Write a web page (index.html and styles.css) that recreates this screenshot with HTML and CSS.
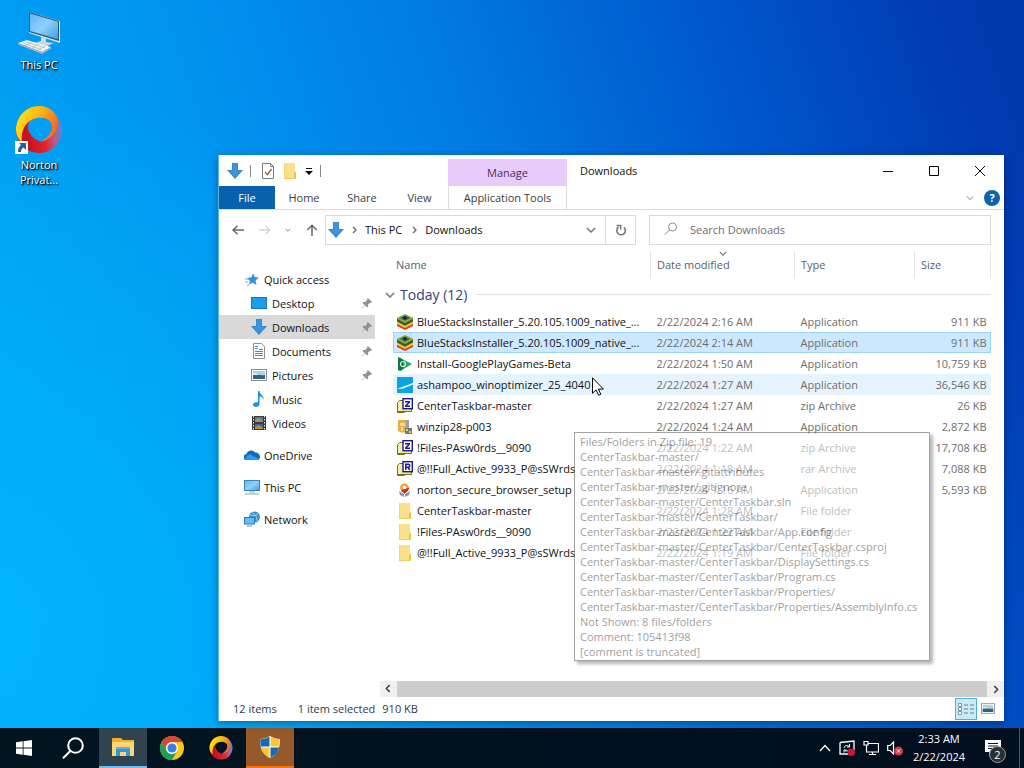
FILE: index.html
```
<!DOCTYPE html>
<html lang="en">
<head>
    <meta charset="UTF-8" />
    <meta name="viewport" content="width=device-width, initial-scale=1.0" />
    <title>Downloads</title>
    <link rel="stylesheet" href="styles.css">
</head>
<body>

<!-- shared icons -->
<svg class="defs" aria-hidden="true">
    <defs>
        <linearGradient id="screen" x1="0" y1="0" x2="1" y2="1">
            <stop offset="0" stop-color="#5fb8f5"/>
            <stop offset="0.5" stop-color="#8ed0fa"/>
            <stop offset="1" stop-color="#3f9de8"/>
        </linearGradient>
        <linearGradient id="ring" x1="0" y1="0.3" x2="1" y2="0.6">
            <stop offset="0" stop-color="#ffe21a"/>
            <stop offset="0.5" stop-color="#fbb515"/>
            <stop offset="1" stop-color="#f0642c"/>
        </linearGradient>
        <linearGradient id="ringLow" x1="0" y1="0.6" x2="1" y2="0.4">
            <stop offset="0.2" stop-color="#c4141f"/>
            <stop offset="0.55" stop-color="#e3202c"/>
            <stop offset="0.8" stop-color="#b0608e"/>
            <stop offset="1" stop-color="#4a8ce0"/>
        </linearGradient>
    </defs>
    <symbol id="i-down" viewBox="0 0 16 16">
        <path d="M5 0h6v7h5l-8 9-8-9h5z" fill="#3d93dc"/>
        <path d="M5.500 .5h5v7h4.300L8 15.200 1.200 7.500h4.300z" fill="none" stroke="#2b7cc4" stroke-opacity=".5"/>
    </symbol>
    <symbol id="i-folder" viewBox="0 0 16 16">
        <path d="M2 0h11v8l1 1v7H2z" fill="#fbe08a"/>
        <path d="M2 0h1v16H2z" fill="#f6d470"/>
        <path d="M12 10l2-1v7h-2z" fill="#efc04d"/>
        <path d="M2 15h12v1H2z" fill="#f2cd62"/>
    </symbol>
    <symbol id="i-pin" viewBox="0 0 12 12">
        <path d="M7 1l4 4-1 1-1-.2-2 2 .2 1.700-1 1L4 8.300 1 11.300.700 11 3.700 8 1.500 5.800l1-1 1.700.2 2-2L6 2z" fill="#8d9298"/>
    </symbol>
    <symbol id="i-stack" viewBox="0 0 16 16">
        <path d="M0 9l8 4 8-4v3l-8 4-8-4z" fill="#dc3b2a"/>
        <path d="M0 7l8 4 8-4v3l-8 4-8-4z" fill="#f5c231"/>
        <path d="M0 4l8 4.500L16 4v3.500l-8 4.200-8-4.200z" fill="#3f5a2c"/>
        <path d="M0 3.800L8 0l8 3.800v1L8 9 0 4.800z" fill="#7fae45"/>
        <path d="M3 4l5-2.500L13 4 8 6.800z" fill="#3c5a55"/>
        <circle cx="8" cy="3.800" r="1.600" fill="#16232b"/>
    </symbol>
    <symbol id="i-zip" viewBox="0 0 16 16">
        <path d="M.5 4.500l2-2h4l1 2v10H.5z" fill="#f7efa8" stroke="#77701a"/>
        <path d="M.5 13.500h14v-3h-8" fill="#f4e98c" stroke="#77701a"/>
        <rect x="6" y=".7" width="9.300" height="10" fill="#fff" stroke="#1a1a8c" stroke-width="1.400"/>
        <path d="M8 3h5v1.500L10 7.500h3V9H8V7.500l3-3H8z" fill="#1a1a8c"/>
    </symbol>
    <symbol id="i-rar" viewBox="0 0 16 16">
        <path d="M.5 4.500l2-2h4l1 2v10H.5z" fill="#f7efa8" stroke="#77701a"/>
        <path d="M.5 13.500h14v-3h-8" fill="#f4e98c" stroke="#77701a"/>
        <rect x="6" y=".7" width="9.300" height="10" fill="#fff" stroke="#1a1a8c" stroke-width="1.400"/>
        <path d="M8.800 9V3.300h2.500a1.400 1.400 0 0 1 0 3H9M11 6.300L12.800 9" fill="none" stroke="#1a1a8c" stroke-width="1.500"/>
    </symbol>
    <symbol id="i-monitor" viewBox="0 0 16 16">
        <rect x=".5" y="1.500" width="15" height="10" fill="url(#screen)" stroke="#3a86bb"/>
        <path d="M5 13h6M1 15h14" stroke="#8aa0b0"/>
    </symbol>
    <symbol id="i-picture" viewBox="0 0 16 12">
        <rect x=".5" y=".5" width="15" height="11" fill="#fff" stroke="#8a8f94"/>
        <rect x="2" y="2" width="12" height="8" fill="#a9d3f0"/>
        <path d="M2 6c4-2 6 1 12 0v4H2z" fill="#36607f"/>
        <path d="M2 5c2-2 4-1 6 1H2z" fill="#dfeffa"/>
    </symbol>
    <symbol id="i-norton" viewBox="0 0 48 48">
        <path fill-rule="evenodd" d="M24 1a23 23 0 1 1 0 46 23 23 0 0 1 0-46zM12.700 20C14 13 20 11.700 25 11.700c7 0 12 3 12 9 0 6-5 12-11 15-7-2-13-8-13.300-15.700z" fill="url(#ringLow)"/>
        <path d="M1 24C1 11 11 0 24 0c12 0 19 8 19 17 0 9-7 16-17 19 6-4 11-9 11-15.300 0-6-5-9-12-9-8 0-20 6-18 25C3 33 1 29 1 24z" fill="url(#ring)"/>
    </symbol>
    <symbol id="i-chevron" viewBox="0 0 10 6">
        <path d="M1 1l4 4 4-4" fill="none" stroke="currentColor" stroke-width="1.500"/>
    </symbol>
    <symbol id="i-right" viewBox="0 0 5 8">
        <path d="M1 1l3 3-3 3" fill="none" stroke="currentColor" stroke-width="1.300"/>
    </symbol>
</svg>

<main class="desktop">
    <div class="shortcuts">
        <a href="#" class="shortcut">
            <svg viewBox="0 0 48 48">
                <path d="M14 6l31 9v22L14 27z" fill="#d9e8f2"/>
                <path d="M14 6l30 9v20L14 26z" fill="#34536e"/>
                <path d="M15 7.500l28 8.300v17.500L15 25z" fill="url(#screen)"/>
                <path d="M26 31l5 1v4l8 1-7 3-12-3 6-2z" fill="#cfd8dd"/>
                <path d="M3 37l9-3 24 7-9 5z" fill="#eef2f4"/>
                <path d="M3 37l24 9 9-5v1.500l-9 5.500L3 38.500z" fill="#aab4bb"/>
                <path d="M8 37l19 7M11 36l19 6M10 40l7-4M17 42l7-4M23 44l7-4" stroke="#b2bdc4" stroke-width=".8"/>
            </svg>
            <span>This PC</span>
        </a>
        <a href="#" class="shortcut">
            <svg viewBox="0 0 48 48">
                <use href="#i-norton"/>
                <rect x="0" y="35" width="13" height="13" fill="#fff"/>
                <path d="M4 37h7v7l-2.500-2.500C6.500 43 6 44 6 46H3c0-4 1-5 3-7z" fill="#2c5c9c"/>
            </svg>
            <span>Norton<br>Privat...</span>
        </a>
    </div>

    <section class="window">
        <header class="titlebar">
            <div class="quick-tools">
                <svg class="icon16"><use href="#i-down"/></svg>
                <i class="divider"></i>
                <button type="button" aria-label="Properties">
                    <svg width="14" height="16" viewBox="0 0 14 16">
                        <path d="M1.500.5h8l3 3v12h-11z" fill="#fff" stroke="#7b7b7b"/>
                        <path d="M9.500.5v3h3" fill="none" stroke="#7b7b7b"/>
                        <path d="M4 9l2.500 2.500L10.500 6" fill="none" stroke="#a0674e" stroke-width="1.500"/>
                    </svg>
                </button>
                <button type="button" aria-label="New folder"><svg class="icon16"><use href="#i-folder"/></svg></button>
                <button type="button" aria-label="Customize">
                    <svg width="8" height="8" viewBox="0 0 8 8"><path d="M1 1.500h6" stroke="#111"/><path d="M0 4h8L4 8z" fill="#111"/></svg>
                </button>
                <i class="divider"></i>
            </div>
            <div class="context-tab">Manage</div>
            <h1>Downloads</h1>
            <div class="controls">
                <button type="button" aria-label="Minimize"><svg viewBox="0 0 10 10"><path d="M0 5.500h10" stroke="#000"/></svg></button>
                <button type="button" aria-label="Maximize"><svg viewBox="0 0 10 10"><path d="M.5.5h9v9h-9z" fill="none" stroke="#000"/></svg></button>
                <button type="button" aria-label="Close"><svg viewBox="0 0 10 10"><path d="M0 0l10 10M10 0L0 10" stroke="#000"/></svg></button>
            </div>
        </header>

        <nav class="ribbon">
            <button type="button" class="file">File</button>
            <button type="button" class="home">Home</button>
            <button type="button" class="share">Share</button>
            <button type="button" class="view">View</button>
            <button type="button" class="tools">Application Tools</button>
            <div class="ribbon-end">
                <button type="button" aria-label="Expand the ribbon"><svg class="chevron"><use href="#i-chevron"/></svg></button>
                <button type="button" class="help" aria-label="Help">?</button>
            </div>
        </nav>

        <div class="address-row">
            <div class="arrows">
                <button type="button" aria-label="Back"><svg width="12" height="10" viewBox="0 0 12 10"><path d="M12 5H1M5.500.7L1 5l4.500 4.300" fill="none" stroke="#666" stroke-width="1.500"/></svg></button>
                <button type="button" aria-label="Forward"><svg width="12" height="10" viewBox="0 0 12 10"><path d="M0 5h11M6.500.7L11 5 6.500 9.300" fill="none" stroke="#d6d6d6" stroke-width="1.300"/></svg></button>
                <button type="button" aria-label="Recent"><svg class="chevron tiny"><use href="#i-chevron"/></svg></button>
                <button type="button" aria-label="Up"><svg width="12" height="12" viewBox="0 0 12 12"><path d="M6 12V1.500M1.200 6L6 1.200 10.800 6" fill="none" stroke="#666" stroke-width="1.500"/></svg></button>
            </div>
            <div class="address">
                <svg class="icon16"><use href="#i-down"/></svg>
                <svg class="right"><use href="#i-right"/></svg>
                <a href="#">This PC</a>
                <svg class="right"><use href="#i-right"/></svg>
                <a href="#">Downloads</a>
                <button type="button" class="drop" aria-label="Previous locations"><svg class="chevron"><use href="#i-chevron"/></svg></button>
                <button type="button" class="refresh" aria-label="Refresh">
                    <svg width="12" height="12" viewBox="0 0 12 12"><path d="M3.500 3A4.300 4.300 0 1 0 9 3.300" fill="none" stroke="#777" stroke-width="1.600"/><path d="M1.500 1.500h4.200v4" fill="none" stroke="#777" stroke-width="1.500"/></svg>
                </button>
            </div>
            <label class="search">
                <svg width="14" height="14" viewBox="0 0 14 14"><circle cx="8.500" cy="5" r="4" fill="none" stroke="#8a8a8a"/><path d="M5.500 8L1 12.500" stroke="#8a8a8a"/></svg>
                <input type="text" placeholder="Search Downloads" aria-label="Search Downloads">
            </label>
        </div>

        <div class="content">
            <nav class="tree">
                <a href="#" class="root">
                    <svg class="icon16" viewBox="0 0 16 16"><path d="M9 2l1.500 4L15 6.500l-3.500 3 1 4.500-4-2.500L5 14l1-4-3-3 4.500-.7z" fill="#2f94de"/><path d="M1 8h3M1 11h3M3 14h2" stroke="#6ab3e8"/></svg>
                    Quick access
                </a>
                <a href="#">
                    <svg class="icon16" viewBox="0 0 16 16"><rect x=".5" y="2.500" width="15" height="11" fill="#1d9df0" stroke="#1177bf"/></svg>
                    Desktop <svg class="pin"><use href="#i-pin"/></svg>
                </a>
                <a href="#" class="current">
                    <svg class="icon16"><use href="#i-down"/></svg>
                    Downloads <svg class="pin"><use href="#i-pin"/></svg>
                </a>
                <a href="#">
                    <svg class="icon16" viewBox="0 0 16 16"><path d="M2.500.5h8l3 3v12h-11z" fill="#fff" stroke="#8a8f94"/><path d="M4 3.500h3M4 5.500h3M4 8.500h8M4 10.500h8M4 12.500h8M8 6.500h4" stroke="#3c93c8"/></svg>
                    Documents <svg class="pin"><use href="#i-pin"/></svg>
                </a>
                <a href="#">
                    <svg class="icon16"><use href="#i-picture"/></svg>
                    Pictures <svg class="pin"><use href="#i-pin"/></svg>
                </a>
                <a href="#">
                    <svg class="icon16" viewBox="0 0 16 16"><path d="M7 0h1.500c0 4 5 4.500 4.500 9-.5-2-2-3.500-4.500-3.500V13c0 1.500-1.500 3-3.500 3S2 15 2 13.500 4 11 7 11.300z" fill="#1d8fe0"/></svg>
                    Music
                </a>
                <a href="#" class="last">
                    <svg class="icon16" viewBox="0 0 16 16"><rect x="1" y="1" width="14" height="14" fill="#3a3a3a"/><path d="M2.500 1v14M13.500 1v14" stroke="#e8e8e8" stroke-dasharray="1.500 1.500"/><path d="M4 2h8v5H4z" fill="#4a78b8"/><path d="M4 9h8v5H4z" fill="#3a66a8"/><path d="M4 5l3-2 5 3v1H4zM4 12l4-2 4 3v1H4z" fill="#b98c4a"/></svg>
                    Videos
                </a>
                <a href="#" class="root">
                    <svg class="icon16" viewBox="0 0 16 16"><path d="M3 13a3 3 0 0 1-.5-6C3.500 3.500 8 2 11 5.500c3 0 5 2 5 4.500 0 1.500-1 3-3 3z" fill="#0f6cbd"/><path d="M2 12.500C1 9 4 7 6.500 7.500L15 12c-.5.700-1 1-2 1H3z" fill="#2a9ae8"/></svg>
                    OneDrive
                </a>
                <a href="#" class="root"><svg class="icon16"><use href="#i-monitor"/></svg> This PC</a>
                <a href="#" class="root">
                    <svg class="icon16" viewBox="0 0 16 16"><circle cx="10.500" cy="6" r="5.500" fill="#3a92cf"/><path d="M8 2c3 1 5 3 5 8M14 3c-3 2-6 2-8 1" stroke="#9bd0f0" fill="none"/><rect x=".5" y="6.500" width="10" height="6.500" fill="#62bdf5" stroke="#2a7ab5"/><path d="M3 15h5" stroke="#6a8ba3"/></svg>
                    Network
                </a>
            </nav>

            <div class="list">
                <table>
                    <colgroup><col><col class="c-date"><col class="c-type"><col class="c-size"></colgroup>
                    <thead>
                        <tr>
                            <th scope="col">Name</th>
                            <th scope="col" class="sorted">Date modified <svg class="chevron sort"><use href="#i-chevron"/></svg></th>
                            <th scope="col">Type</th>
                            <th scope="col">Size</th>
                        </tr>
                    </thead>
                    <tbody>
                        <tr class="group">
                            <th colspan="4" scope="rowgroup"><div><svg class="chevron"><use href="#i-chevron"/></svg><span>Today (12)</span></div></th>
                        </tr>
                        <tr><td><svg><use href="#i-stack"/></svg>BlueStacksInstaller_5.20.105.1009_native_...</td><td>2/22/2024 2:16 AM</td><td>Application</td><td>911 KB</td></tr>
                        <tr class="selected"><td><svg><use href="#i-stack"/></svg>BlueStacksInstaller_5.20.105.1009_native_...</td><td>2/22/2024 2:14 AM</td><td>Application</td><td>911 KB</td></tr>
                        <tr><td><svg viewBox="0 0 16 16"><path d="M1 1l14 7L3 15z" fill="#1fa463"/><path d="M1 1l5 2.500V13l-3 2-2-1z" fill="#0b7a45"/><circle cx="6" cy="8" r="2.500" fill="none" stroke="#d8f3e4" stroke-width="1.200"/></svg>Install-GooglePlayGames-Beta</td><td>2/22/2024 1:50 AM</td><td>Application</td><td>10,759 KB</td></tr>
                        <tr class="hovered"><td><svg viewBox="0 0 16 16"><path d="M0 0h16v16H0z" fill="#0ba3e8"/><path d="M0 12l16-6v1.500L6 11.500z" fill="#fff"/></svg>ashampoo_winoptimizer_25_4040</td><td>2/22/2024 1:27 AM</td><td>Application</td><td>36,546 KB</td></tr>
                        <tr><td><svg><use href="#i-zip"/></svg>CenterTaskbar-master</td><td>2/22/2024 1:27 AM</td><td>zip Archive</td><td>26 KB</td></tr>
                        <tr><td><svg viewBox="0 0 16 16"><path d="M1 1h9v11l-4 2-5-2z" fill="#e8ac45"/><path d="M3 4h5v3H3zM4 8h2v4H4z" fill="#f7dca0"/><path d="M9 1h3v9H9z" fill="#9a9fa8"/><path d="M8 9h7v6H8z" fill="#6c7684"/><path d="M9 10h2v2H9zM12 12h2v2h-2z" fill="#e6d25a"/></svg>winzip28-p003</td><td>2/22/2024 1:24 AM</td><td>Application</td><td>2,872 KB</td></tr>
                        <tr><td><svg><use href="#i-zip"/></svg>!Files-PAsw0rds__9090</td><td>2/22/2024 1:22 AM</td><td>zip Archive</td><td>17,708 KB</td></tr>
                        <tr><td><svg><use href="#i-rar"/></svg>@!!Full_Active_9933_P@sSWrds</td><td>2/22/2024 1:18 AM</td><td>rar Archive</td><td>7,088 KB</td></tr>
                        <tr><td><svg viewBox="0 0 16 16"><path d="M3 6a4.500 4.500 0 1 1 9 0c0 2-2 4-4.500 5.500C5 10 3 8 3 6z" fill="#f0a52c"/><path d="M4 8c2 0 6-2 8-2 0 2-2 4-4.500 5.500C6 10.500 5 9.500 4 8z" fill="#c72a2f"/><circle cx="7.500" cy="5.500" r="1.800" fill="#fff"/><path d="M2 9l5 3v3l-4-2zM13 9l-5 3v3l4-2z" fill="#8a93a5"/></svg>norton_secure_browser_setup</td><td>2/22/2024 1:16 AM</td><td>Application</td><td>5,593 KB</td></tr>
                        <tr><td><svg><use href="#i-folder"/></svg>CenterTaskbar-master</td><td>2/22/2024 1:28 AM</td><td>File folder</td><td></td></tr>
                        <tr><td><svg><use href="#i-folder"/></svg>!Files-PAsw0rds__9090</td><td>2/22/2024 1:22 AM</td><td>File folder</td><td></td></tr>
                        <tr><td><svg><use href="#i-folder"/></svg>@!!Full_Active_9933_P@sSWrds</td><td>2/22/2024 1:19 AM</td><td>File folder</td><td></td></tr>
                    </tbody>
                </table>
                <div class="scrollbar">
                    <button type="button" class="flip" aria-label="Scroll left"><svg><use href="#i-right"/></svg></button>
                    <div class="thumb"></div>
                    <button type="button" aria-label="Scroll right"><svg><use href="#i-right"/></svg></button>
                </div>
            </div>
        </div>

        <footer class="status">
            <span>12 items</span>
            <span class="picked">1 item selected</span>
            <span>910 KB</span>
            <div class="views">
                <button type="button" class="on" aria-label="Details">
                    <svg width="16" height="14" viewBox="0 0 16 14"><path d="M.5 1.500h3v3h-3zM.5 5.500h3v3h-3zM.5 9.500h3v3h-3z" fill="#fff" stroke="#7a98a8"/><path d="M6 3h4M12 3h4M6 7h4M12 7h4M6 11h4M12 11h4" stroke="#6b7f8a"/></svg>
                </button>
                <button type="button" aria-label="Large icons"><svg width="14" height="11"><use href="#i-picture"/></svg></button>
            </div>
        </footer>
    </section>

    <div class="tooltip" role="tooltip">
        Files/Folders in Zip file: 19<br>
        CenterTaskbar-master/<br>
        CenterTaskbar-master/.gitattributes<br>
        CenterTaskbar-master/.gitignore<br>
        CenterTaskbar-master/CenterTaskbar.sln<br>
        CenterTaskbar-master/CenterTaskbar/<br>
        CenterTaskbar-master/CenterTaskbar/App.config<br>
        CenterTaskbar-master/CenterTaskbar/CenterTaskbar.csproj<br>
        CenterTaskbar-master/CenterTaskbar/DisplaySettings.cs<br>
        CenterTaskbar-master/CenterTaskbar/Program.cs<br>
        CenterTaskbar-master/CenterTaskbar/Properties/<br>
        CenterTaskbar-master/CenterTaskbar/Properties/AssemblyInfo.cs<br>
        Not Shown: 8 files/folders<br>
        Comment: 105413f98<br>
        [comment is truncated]
    </div>
    <svg class="cursor" viewBox="0 0 12 19"><path d="M.5.8v15.500l3.600-3.400 2.500 5.400 2.200-1-2.400-5.200h5z" fill="#fff" stroke="#000"/></svg>
</main>

<footer class="taskbar">
    <button type="button" aria-label="Start">
        <svg width="16" height="16" viewBox="0 0 16 16"><path d="M0 2.300L6.700 1.300v6.300H0zM7.500 1.200L16 0v7.600H7.500zM0 8.400h6.700v6.300L0 13.700zM7.500 8.400H16V16l-8.500-1.200z" fill="#fff"/></svg>
    </button>
    <button type="button" aria-label="Search">
        <svg width="22" height="22" viewBox="0 0 22 22"><circle cx="13.500" cy="8.500" r="7.300" fill="none" stroke="#fff" stroke-width="2"/><path d="M8.300 14L1 21.300" stroke="#fff" stroke-width="2"/></svg>
    </button>
    <button type="button" class="open" aria-label="File Explorer">
        <svg width="22" height="18" viewBox="0 0 22 18"><path d="M0 1a1 1 0 0 1 1-1h8l2 2h11v16H0z" fill="#f2ad32"/><path d="M0 4h22v14H0z" fill="#fcd872"/><path d="M4 9h14v9h-4v-4H8v4H4z" fill="#3c93d4"/><path d="M4 9h14v2H4z" fill="#62b0e4"/></svg>
    </button>
    <button type="button" aria-label="Chrome">
        <svg width="24" height="24" viewBox="0 0 24 24"><circle cx="12" cy="12" r="12" fill="#fbc916"/><path d="M1.600 6A12 12 0 0 1 22.400 6H12a6 6 0 0 0-5.200 9z" fill="#dc4437"/><path d="M1.600 6A12 12 0 0 0 12 24l5.200-9a6 6 0 0 1-10.400 0z" fill="#1e9e57"/><circle cx="12" cy="12" r="6" fill="#fff"/><circle cx="12" cy="12" r="4.600" fill="#3b7ded"/></svg>
    </button>
    <button type="button" aria-label="Norton Private Browser"><svg width="24" height="24"><use href="#i-norton"/></svg></button>
    <button type="button" class="alert" aria-label="User Account Control">
        <svg width="20" height="22" viewBox="0 0 20 22"><path d="M10 0c3 2 6 3 10 3 0 9-2 15-10 19C2 18 0 12 0 3c4 0 7-1 10-3z" fill="#fff"/><path d="M9.500.8v9.700H.8C.4 8 .2 5.500.2 3.300c4 0 6.500-1 9.300-2.500zM10.500 11.500h8.500c-1 4.500-3.500 7.500-8.500 10z" fill="#1668b8"/><path d="M10.500.8v9.700h8.700c.4-2.500.6-5 .6-7.200-4 0-6.500-1-9.300-2.500zM9.500 11.500H1c1 4.500 3.500 7.500 8.500 10z" fill="#fcc63c"/></svg>
    </button>
    <div class="tray">
        <svg width="12" height="8" viewBox="0 0 12 8"><path d="M1 7l5-5.500L11 7" fill="none" stroke="#fff" stroke-width="1.300"/></svg>
        <svg width="16" height="16" viewBox="0 0 16 16"><path d="M1 2.500L15 1v9M1 2.500v11.500h9" fill="none" stroke="#fff" stroke-width="1.300"/><path d="M5 8C5.500 5 8.500 5 10 6.500M10.500 4v3H8M10.500 9c-1 2.500-4 2.500-5 1M5 12.500V10h2.500" fill="none" stroke="#fff"/><circle cx="12.300" cy="12.300" r="3.700" fill="#d3122c"/></svg>
        <svg width="16" height="16" viewBox="0 0 16 16"><path d="M5 3.500h10.500v8.500H3.500V5M9.500 12v2.500M6 14.500h7M1 1.500h4V5H1z" fill="none" stroke="#fff" stroke-width="1.200"/></svg>
        <svg width="16" height="16" viewBox="0 0 16 16"><path d="M.7 5.500h2.500L6.500 2v12L3.200 10.500H.7z" fill="none" stroke="#fff" stroke-width="1.200"/><circle cx="11.500" cy="11" r="4.500" fill="#cf3b40"/><path d="M9.800 9.300l3.400 3.400M13.200 9.300l-3.400 3.400" stroke="#fff"/></svg>
        <div class="clock">2:33 AM<br>2/22/2024</div>
        <button type="button" class="notices" aria-label="Notifications">
            <svg width="16" height="16" viewBox="0 0 16 16"><path d="M0 0h16v12H8l-4 4v-4H0z" fill="#fff"/><path d="M3 3.500h10M3 6h10M3 8.500h7" stroke="#0a1624"/></svg>
            <span class="badge">2</span>
        </button>
    </div>
</footer>

</body>
</html>
```
FILE: styles.css
```
* {
    box-sizing: border-box;
}

body {
    margin: 0;
    height: 100vh;
    display: flex;
    flex-direction: column;
    overflow: hidden;
    font-family: 'Open Sans', 'Noto Sans', sans-serif;
    font-size: 11px;
    line-height: 15px;
    color: #111;
}

button {
    display: flex;
    align-items: center;
    justify-content: center;
    padding: 0;
    border: none;
    background: none;
    font: inherit;
    color: inherit;
}

a {
    color: inherit;
    text-decoration: none;
}

svg {
    flex: none;
}

.defs {
    position: absolute;
    width: 0;
    height: 0;
}

.icon16 {
    width: 16px;
    height: 16px;
}

.chevron {
    width: 10px;
    height: 6px;
    color: #777;
}

.chevron.tiny {
    width: 6px;
    height: 4px;
}

/* desktop */
.desktop {
    position: relative;
    flex: 1;
    background:
        radial-gradient(circle at 0 85%, rgba(0, 184, 255, 0.8), rgba(0, 170, 255, 0) 45%),
        linear-gradient(72deg, #00a8f8 0%, #0096f0 30%, #007ce2 52%, #0055ca 76%, #003cb4 92%, #0038ae 100%);
}

.shortcuts {
    display: flex;
    flex-direction: column;
    gap: 34px;
    width: 78px;
    padding-top: 6px;
}

.shortcut {
    display: flex;
    flex-direction: column;
    align-items: center;
    gap: 3px;
    color: #fff;
    text-align: center;
    text-shadow: 1px 1px 1px #000, 1px 1px 3px #000;
}

.shortcut svg {
    width: 48px;
    height: 48px;
}

/* explorer window */
.window {
    position: absolute;
    top: 155px;
    right: 20px;
    bottom: 7px;
    left: 218px;
    display: flex;
    flex-direction: column;
    border-left: 1px solid #5fb4e8;
    background: #fff;
    box-shadow: 0 2px 8px rgba(0, 0, 0, 0.35);
}

.titlebar {
    display: flex;
    height: 31px;
}

.quick-tools {
    display: flex;
    align-items: center;
    gap: 7px;
    width: 229px;
    padding-left: 8px;
}

.divider {
    width: 1px;
    height: 12px;
    background: #8a8a8a;
}

.divider:first-of-type {
    margin-right: 3px;
}

.context-tab {
    width: 119px;
    margin-top: 4px;
    background: #e9cbfb;
    color: #47305c;
    line-height: 28px;
    text-align: center;
}

h1 {
    margin: 0 0 0 13px;
    font-size: 11px;
    font-weight: normal;
    line-height: 31px;
}

.controls {
    display: flex;
    margin-left: auto;
    padding-right: 1px;
}

.controls button {
    width: 46px;
}

.controls svg {
    width: 10px;
    height: 10px;
}

.ribbon {
    display: flex;
    height: 24px;
    border-bottom: 1px solid #dcdcdc;
    color: #3c3c3c;
}

.file {
    width: 56px;
    background: #0961ae;
    color: #fff;
}

.home,
.share {
    width: 58px;
}

.view {
    width: 57px;
}

.tools {
    width: 119px;
    border-right: 1px solid #dcdcdc;
    border-left: 1px solid #dcdcdc;
}

.ribbon-end {
    display: flex;
    align-items: center;
    gap: 10px;
    margin-left: auto;
    padding-right: 4px;
}

.ribbon-end .chevron {
    width: 8px;
    color: #b0b0b0;
}

.help {
    width: 16px;
    height: 16px;
    border-radius: 50%;
    background: #0e63ad;
    color: #fff;
    font-weight: bold;
}

.address-row {
    display: flex;
    padding: 5px 13px 0 0;
}

.arrows {
    display: flex;
    align-items: center;
    justify-content: space-between;
    width: 106px;
    padding: 0 7px 0 13px;
}

.address {
    flex: 1;
    display: flex;
    align-items: center;
    height: 30px;
    padding: 0 0 1px 2px;
    border: 1px solid #d9d9d9;
}

.address a {
    margin-right: 2px;
}

.right {
    width: 5px;
    height: 8px;
    margin: 0 8px;
    color: #666;
}

.drop {
    width: 29px;
    height: 100%;
    margin-left: auto;
}

.refresh {
    width: 30px;
    height: 29px;
    border-left: 1px solid #d9d9d9;
}

.search {
    display: flex;
    align-items: center;
    gap: 12px;
    width: 342px;
    height: 30px;
    margin-left: 13px;
    padding: 0 0 2px 14px;
    border: 1px solid #d9d9d9;
}

.search input {
    flex: 1;
    min-width: 0;
    padding: 0;
    border: none;
    outline: none;
    background: none;
    font: inherit;
}

.search input::placeholder {
    color: #6d6d6d;
    opacity: 1;
}

.content {
    flex: 1;
    display: flex;
    min-height: 0;
    padding-top: 6px;
}

/* folder tree */
.tree {
    width: 156px;
    padding-top: 16px;
}

.tree a {
    display: flex;
    align-items: center;
    gap: 5px;
    height: 24px;
    padding: 0 2px 0 32px;
}

.tree .root {
    gap: 4px;
    padding-left: 25px;
}

.tree .root ~ .root {
    margin-bottom: 8px;
}

.tree .last {
    margin-bottom: 8px;
}

.tree .current {
    background: #d9d9d9;
}

.pin {
    width: 12px;
    height: 12px;
    margin-left: auto;
}

/* file list */
.list {
    flex: 1;
    display: flex;
    flex-direction: column;
    min-width: 0;
    margin-left: 5px;
}

table {
    width: calc(100% - 26px);
    margin-left: 13px;
    table-layout: fixed;
    border-collapse: collapse;
}

.c-date {
    width: 144px;
}

.c-type {
    width: 120px;
}

.c-size {
    width: 76px;
}

thead th {
    position: relative;
    height: 27px;
    padding: 0 6px;
    border-right: 1px solid #e3e3e3;
    color: #56616e;
    font-weight: normal;
    text-align: left;
}

thead th:first-child {
    padding-left: 3px;
}

.sort {
    position: absolute;
    top: 0;
    left: 68px;
    width: 8px;
    height: 5px;
}

.group th {
    height: 33px;
    padding: 0;
    font-weight: normal;
}

.group div {
    display: flex;
    align-items: center;
    gap: 5px;
    margin-left: -8px;
    color: #3b3b78;
    font-size: 14px;
}

.group div::after {
    content: '';
    flex: 1;
    height: 1px;
    margin-left: 3px;
    background: #dfdfdf;
}

td {
    height: 21px;
    padding: 0 6px;
    color: #6d6d6d;
    white-space: nowrap;
}

td:first-child {
    padding: 0 0 0 4px;
    color: #111;
}

td:last-child {
    padding: 0 4px 0 0;
    text-align: right;
}

td svg {
    width: 16px;
    height: 16px;
    margin-right: 4px;
    vertical-align: -4px;
}

.selected {
    background: #cce8ff;
    outline: 1px solid #99d1ff;
    outline-offset: -1px;
}

.hovered {
    background: #e5f3ff;
}

.scrollbar {
    display: flex;
    height: 16px;
    margin-top: auto;
    background: #f0f0f0;
}

.scrollbar button {
    width: 17px;
    color: #404040;
}

.scrollbar svg {
    width: 6px;
    height: 9px;
}

.scrollbar .flip {
    transform: rotate(180deg);
}

.thumb {
    flex: 1;
    background: #cdcdcd;
}

.status {
    display: flex;
    align-items: center;
    height: 24px;
    padding: 0 5px 1px 14px;
    color: #2f3a4a;
}

.picked {
    margin: 0 7px 0 21px;
}

.views {
    display: flex;
    margin-left: auto;
}

.views button {
    width: 22px;
    height: 22px;
}

.views .on {
    border: 1px solid #4fb0dc;
    background: #c9ebf8;
}

/* things floating above the window */
.tooltip {
    position: absolute;
    top: 432px;
    left: 574px;
    width: 356px;
    padding: 1px 5px;
    border: 1px solid #575757;
    background: #fff;
    box-shadow: 3px 3px 3px rgba(0, 0, 0, 0.5);
    color: #505050;
    opacity: 0.55;
    white-space: nowrap;
}

.cursor {
    position: absolute;
    top: 377px;
    left: 592px;
    width: 12px;
    height: 19px;
}

/* taskbar */
.taskbar {
    display: flex;
    height: 40px;
    background: linear-gradient(90deg, #01151f, #010f1f);
    color: #fff;
}

.taskbar > button {
    width: 48px;
    margin-right: 1px;
}

.taskbar .open {
    margin-left: 1px;
    border-bottom: 2px solid #76b9ed;
    background: #2f4350;
}

.taskbar .alert {
    border-bottom: 2px solid #f7720b;
    background: #955a2c;
}

.tray {
    display: flex;
    align-items: center;
    gap: 8px;
    margin-left: auto;
    padding-right: 4px;
}

.clock {
    width: 56px;
    line-height: 18px;
    text-align: center;
}

.notices {
    position: relative;
    width: 48px;
    height: 100%;
    margin-left: -3px;
    padding-right: 6px;
    border-right: 1px solid #4c5a66;
}

.badge {
    position: absolute;
    right: 13px;
    bottom: 5px;
    width: 17px;
    height: 17px;
    border: 1px solid #9a9a9a;
    border-radius: 50%;
    background: #2a2f36;
    line-height: 15px;
}
```
